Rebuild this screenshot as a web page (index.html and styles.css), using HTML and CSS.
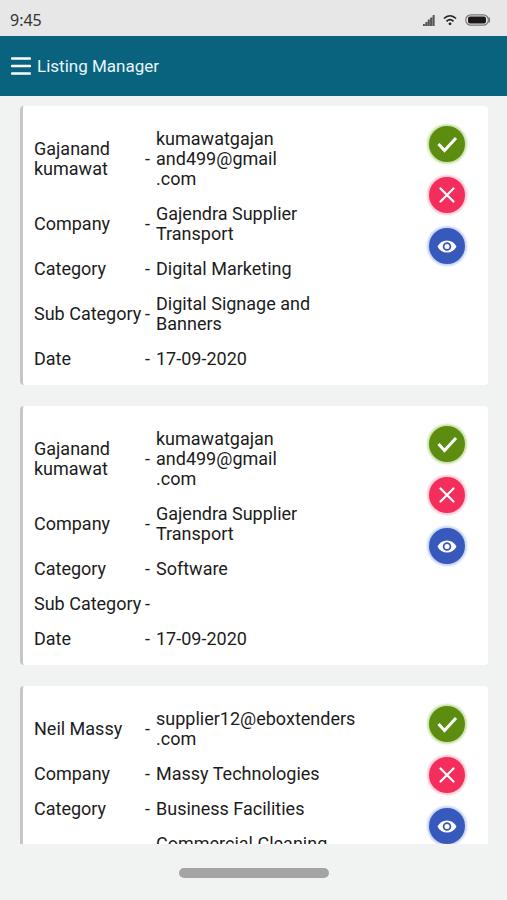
FILE: index.html
```html
<!DOCTYPE html>
<html lang="en">
<head>
<meta charset="utf-8">
<meta name="viewport" content="width=device-width, initial-scale=1">
<title>Listing Manager</title>
<link rel="stylesheet" href="styles.css">
</head>
<body>
<svg class="sprite" aria-hidden="true">
  <symbol id="check" viewBox="0 0 36 36"><path d="M9.500 18l6 6.500L27 12" fill="none" stroke="#fff" stroke-width="3"/></symbol>
  <symbol id="cross" viewBox="0 0 36 36"><path d="M11.500 11.500l13 13M24.500 11.500l-13 13" fill="none" stroke="#fff" stroke-width="2.200" stroke-linecap="round"/></symbol>
  <symbol id="eye" viewBox="0 0 36 36"><path fill="#fff" fill-rule="evenodd" d="M8.500 18.500C10.500 14.500 14 12.500 18 12.500s7.500 2 9.500 6c-2 4-5.500 6-9.500 6s-7.500-2-9.500-6zM18 14.200a4.300 4.300 0 1 0 0 8.600 4.300 4.300 0 0 0 0-8.600z"/><circle cx="18" cy="18.500" r="2.500" fill="#fff"/></symbol>
</svg>
<div class="statusbar">
  <span class="time">9:45</span>
  <svg class="signal" viewBox="0 0 12 12" aria-hidden="true"><path fill="#999" d="M0 12L11.500 1v11z"/><path fill="#555" d="M0 10h1.800v2H0zM2.400 8h1.800v4H2.400zM4.800 5.500h1.800V12H4.800zM7.200 3.500H9V12H7.200zM9.700 1h1.800v11H9.700z"/></svg>
  <svg class="wifi" viewBox="0 0 14 12" aria-hidden="true"><path d="M1 4.500C4.500 .8 9.500 .8 13 4.500M3.500 7.300c2.200-2 4.800-2 7 0" fill="none" stroke="#222" stroke-width="1.700"/><circle cx="7" cy="9.800" r="1.400" fill="#222"/></svg>
  <svg class="battery" viewBox="0 0 26 12" aria-hidden="true"><rect x=".8" y=".8" width="22.500" height="10.400" rx="5" fill="none" stroke="#777" stroke-width="1.200"/><rect x="3" y="2.500" width="18" height="7" rx="2" fill="#1c1717"/><path d="M24 3.500q1.500 2.500 0 5z" fill="#777" stroke="#777"/></svg>
</div>
<header class="appbar">
  <button class="menu" type="button" aria-label="Menu"><svg viewBox="0 0 20 18"><path d="M1 1.500h18M1 9h18M1 16.500h18" stroke="#fff" stroke-width="2.400" stroke-linecap="round"/></svg></button>
  <h1>Listing Manager</h1>
</header>
<main class="listings">
  <article class="card">
    <dl class="details">
      <div class="row"><dt>Gajanand kumawat</dt><dd><span>-</span><span>kumawatgajan<br>and499@gmail<br>.com</span></dd></div>
      <div class="row"><dt>Company</dt><dd><span>-</span><span>Gajendra Supplier<br>Transport</span></dd></div>
      <div class="row"><dt>Category</dt><dd><span>-</span><span>Digital Marketing</span></dd></div>
      <div class="row"><dt>Sub Category</dt><dd><span>-</span><span>Digital Signage and<br>Banners</span></dd></div>
      <div class="row"><dt>Date</dt><dd><span>-</span><span>17-09-2020</span></dd></div>
    </dl>
    <div class="actions">
      <button class="action approve" type="button" aria-label="Approve"><svg><use href="#check"/></svg></button>
      <button class="action reject" type="button" aria-label="Reject"><svg><use href="#cross"/></svg></button>
      <button class="action view" type="button" aria-label="View"><svg><use href="#eye"/></svg></button>
    </div>
  </article>
  <article class="card">
    <dl class="details">
      <div class="row"><dt>Gajanand kumawat</dt><dd><span>-</span><span>kumawatgajan<br>and499@gmail<br>.com</span></dd></div>
      <div class="row"><dt>Company</dt><dd><span>-</span><span>Gajendra Supplier<br>Transport</span></dd></div>
      <div class="row"><dt>Category</dt><dd><span>-</span><span>Software</span></dd></div>
      <div class="row"><dt>Sub Category</dt><dd><span>-</span></dd></div>
      <div class="row"><dt>Date</dt><dd><span>-</span><span>17-09-2020</span></dd></div>
    </dl>
    <div class="actions">
      <button class="action approve" type="button" aria-label="Approve"><svg><use href="#check"/></svg></button>
      <button class="action reject" type="button" aria-label="Reject"><svg><use href="#cross"/></svg></button>
      <button class="action view" type="button" aria-label="View"><svg><use href="#eye"/></svg></button>
    </div>
  </article>
  <article class="card">
    <dl class="details">
      <div class="row"><dt>Neil Massy</dt><dd><span>-</span><span>supplier12@eboxtenders<br>.com</span></dd></div>
      <div class="row"><dt>Company</dt><dd><span>-</span><span>Massy Technologies</span></dd></div>
      <div class="row"><dt>Category</dt><dd><span>-</span><span>Business Facilities</span></dd></div>
      <div class="row"><dt></dt><dd><span></span><span>Commercial Cleaning</span></dd></div>
    </dl>
    <div class="actions">
      <button class="action approve" type="button" aria-label="Approve"><svg><use href="#check"/></svg></button>
      <button class="action reject" type="button" aria-label="Reject"><svg><use href="#cross"/></svg></button>
      <button class="action view" type="button" aria-label="View"><svg><use href="#eye"/></svg></button>
    </div>
  </article>
</main>
<footer class="gesture"><div class="handle"></div></footer>
</body>
</html>
```
FILE: styles.css
```css
* { box-sizing: border-box; }
body {
  margin: 0;
  height: 100vh;
  display: flex;
  flex-direction: column;
  background: #f0f3f2;
  color: #1c1c1c;
  font-family: Roboto, "Liberation Sans", sans-serif;
  font-size: 18px;
  line-height: 20px;
}
.sprite { position: absolute; width: 0; height: 0; }
button { padding: 0; border: 0; background: none; cursor: pointer; }
svg { display: block; }
.statusbar {
  flex: none;
  display: flex;
  align-items: center;
  height: 36px;
  padding: 4px 16px 0 10px;
  background: #e7e7e7;
}
.time {
  flex: 1;
  color: #333;
  font: 16px/20px "Noto Sans", sans-serif;
}
.signal { width: 12px; height: 12px; }
.wifi { width: 14px; height: 12px; margin: 0 8px; }
.battery { width: 26px; height: 12px; }
.appbar {
  flex: none;
  display: flex;
  align-items: center;
  gap: 6px;
  height: 60px;
  padding: 0 11px;
  background: #09637f;
  color: #e9f6fa;
}
.menu svg { width: 20px; height: 18px; }
.appbar h1 { margin: 0; font-size: 17px; font-weight: 400; line-height: 20px; }
.listings {
  flex: 1;
  min-height: 0;
  display: flex;
  flex-direction: column;
  gap: 21px;
  padding: 10px 19px 0 20px;
  overflow: hidden;
}
.card {
  flex: none;
  display: flex;
  padding: 15px 23px 9px 11px;
  background: #fff;
  border-left: 3px solid #c6c6c6;
  border-radius: 4px;
}
.details { flex: 1; margin: 0; }
.row {
  display: grid;
  grid-template-columns: 111px 1fr;
  align-items: center;
  padding: 8px 0 7px;
}
.row dd {
  display: grid;
  grid-template-columns: 11px 1fr;
  align-items: center;
  margin: 0;
}
.actions { display: flex; flex-direction: column; gap: 15px; padding-top: 5px; }
.action { width: 36px; height: 36px; border-radius: 50%; }
.action svg { width: 36px; height: 36px; }
.approve { background: #5c8c10; box-shadow: 0 0 2px 2px #c8e2a8; }
.reject { background: #f42e5c; box-shadow: 0 0 2px 2px #fbc6d2; }
.view { background: #3659bb; box-shadow: 0 0 2px 2px #c4d2f6; }
.gesture {
  flex: none;
  display: flex;
  justify-content: center;
  height: 56px;
  padding-top: 24px;
}
.handle { width: 150px; height: 10px; border-radius: 5px; background: #a4a4a4; }
```
